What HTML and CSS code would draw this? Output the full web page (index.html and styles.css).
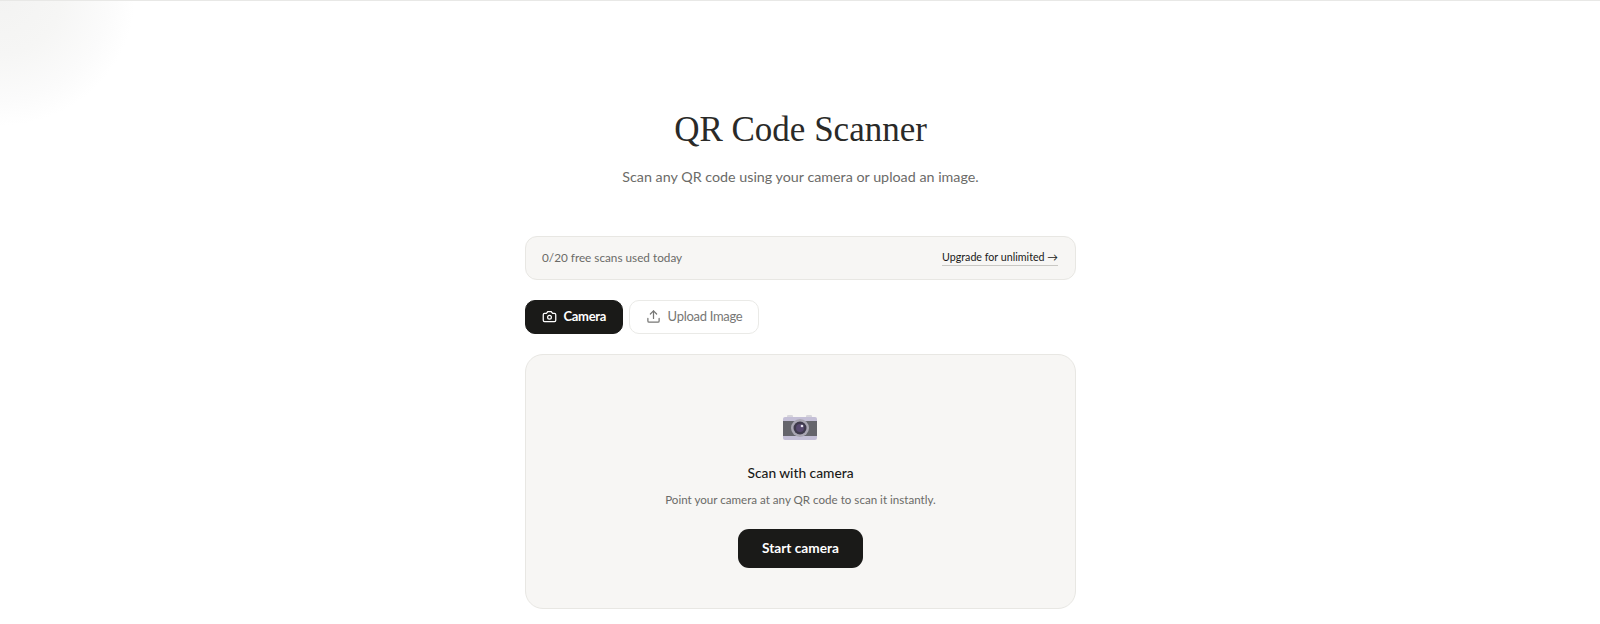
FILE: index.html
```html
<!DOCTYPE html>
<html lang="en">
<head>
<meta charset="utf-8">
<title>QR Code Scanner</title>
<link rel="stylesheet" href="styles.css">
</head>
<body>
<div class="glow"></div>
<main class="page">
  <header class="hero">
    <h1 class="title">QR Code Scanner</h1>
    <p class="subtitle">Scan any QR code using your camera or upload an image.</p>
  </header>
  <section class="usage">
    <span class="usage-count">0/20 free scans used today</span>
    <a class="usage-link" href="#">Upgrade for unlimited →</a>
  </section>
  <nav class="tabs">
    <button class="tab tab-active">
      <svg class="tab-icon" viewBox="0 0 24 24" fill="none" stroke="currentColor" stroke-width="2" stroke-linecap="round" stroke-linejoin="round"><path d="M14.5 4h-5L7 7H4a2 2 0 0 0-2 2v9a2 2 0 0 0 2 2h16a2 2 0 0 0 2-2V9a2 2 0 0 0-2-2h-3l-2.500-3z"/><circle cx="12" cy="13" r="3"/></svg>
      Camera
    </button>
    <button class="tab">
      <svg class="tab-icon" viewBox="0 0 24 24" fill="none" stroke="currentColor" stroke-width="2" stroke-linecap="round" stroke-linejoin="round"><path d="M21 15v4a2 2 0 0 1-2 2H5a2 2 0 0 1-2-2v-4"/><polyline points="17 8 12 3 7 8"/><line x1="12" y1="3" x2="12" y2="15"/></svg>
      Upload Image
    </button>
  </nav>
  <section class="panel">
    <svg class="panel-icon" viewBox="0 0 36 28">
      <rect x="5" y="1" width="6" height="3" rx="1.200" fill="#d8d6dc"/>
      <rect x="24" y="1" width="6" height="3" rx="1.200" fill="#d8d6dc"/>
      <rect x="1" y="3" width="34" height="23" rx="2" fill="#c4bfd6"/>
      <rect x="1" y="7" width="34" height="15" fill="#66666c"/>
      <circle cx="18" cy="14" r="9" fill="#a9a6b2"/>
      <circle cx="18" cy="14" r="6.500" fill="#3f3a4c"/>
      <circle cx="18" cy="14" r="4" fill="#57496e"/>
      <circle cx="20" cy="12" r="1.300" fill="#e6e2ef"/>
    </svg>
    <h2 class="panel-title">Scan with camera</h2>
    <p class="panel-text">Point your camera at any QR code to scan it instantly.</p>
    <button class="start">Start camera</button>
  </section>
</main>
</body>
</html>
```
FILE: styles.css
```css
* { box-sizing: border-box; }
html, body { margin: 0; padding: 0; height: 100%; }
body {
  position: relative;
  overflow: hidden;
  padding-left: 1px;
  background: #fff;
  color: #1a1a18;
  font-family: "Lato", "Liberation Sans", sans-serif;
  border-top: 1px solid #e8e8e6;
}
.glow {
  position: absolute;
  left: -135px;
  top: -135px;
  width: 270px;
  height: 260px;
  border-radius: 50%;
  background: radial-gradient(closest-side, #f3f3f2 0%, #f6f6f5 45%, #fbfbfb 80%, #ffffff 100%);
}
.page {
  position: relative;
  width: 551px;
  margin: 0 auto;
  padding-top: 106px;
}
.hero { text-align: center; }
.title {
  margin: 0;
  font-family: "Liberation Serif", serif;
  font-weight: 400;
  font-size: 35px;
  line-height: 46px;
  color: #2a2a28;
}
.subtitle {
  margin: 13px 0 0;
  font-size: 14.300px;
  line-height: 22px;
  color: #6b6b68;
}
.usage {
  display: flex;
  justify-content: space-between;
  align-items: center;
  height: 44px;
  margin-top: 48px;
  padding: 0 17px 0 16px;
  background: #f7f6f4;
  border: 1px solid #e8e7e3;
  border-radius: 12px;
}
.usage-count {
  padding-bottom: 2px;
  font-size: 11.750px;
  color: #6b6b68;
}
.usage-link {
  font-size: 10.700px;
  color: #1a1a18;
  text-decoration: none;
  padding-bottom: 2px;
  border-bottom: 1px solid #c9c8c4;
}
.tabs {
  display: flex;
  gap: 6px;
  margin-top: 20px;
}
.tab {
  display: flex;
  align-items: center;
  gap: 6.500px;
  height: 34px;
  padding: 0 16px 2px;
  font-family: inherit;
  font-size: 13px;
  letter-spacing: -0.3px;
  color: #777775;
  background: #fff;
  border: 1px solid #eaeae7;
  border-radius: 10px;
}
.tab-active {
  color: #fff;
  font-weight: 700;
  background: #1a1a18;
  border-color: #1a1a18;
}
.tab-icon { width: 15px; height: 15px; }
.panel {
  display: flex;
  flex-direction: column;
  align-items: center;
  height: 255px;
  margin-top: 20px;
  padding-top: 59px;
  background: #f7f6f4;
  border: 1px solid #e8e7e3;
  border-radius: 18px;
}
.panel-icon {
  width: 36px;
  height: 28px;
  margin-right: 2px;
}
.panel-title {
  margin: 21px 0 0;
  font-size: 13.750px;
  line-height: 20px;
  font-weight: 500;
  color: #1a1a18;
}
.panel-text {
  margin: 8px 0 0;
  font-size: 11.600px;
  line-height: 18px;
  color: #6b6b68;
}
.start {
  width: 125px;
  height: 39px;
  margin-top: 20px;
  padding-bottom: 2px;
  font-family: inherit;
  font-size: 13.650px;
  font-weight: 700;
  color: #fff;
  background: #1a1a18;
  border: 0;
  border-radius: 11px;
}
```
